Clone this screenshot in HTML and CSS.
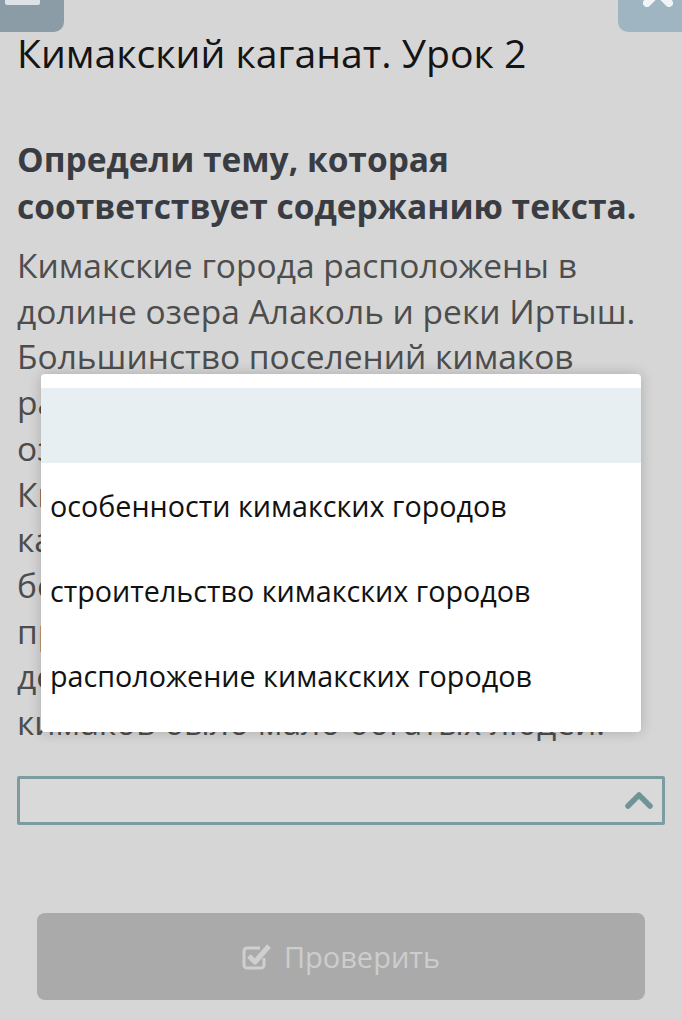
FILE: index.html
```html
<!DOCTYPE html>
<html lang="ru">
<head>
<meta charset="utf-8">
<title>Кимакский каганат. Урок 2</title>
<link rel="stylesheet" href="styles.css">
</head>
<body>
<header class="topbar">
  <div class="corner corner-left"><span class="bar"></span></div>
  <div class="corner corner-right">
    <svg class="x-icon" viewBox="0 0 30 30" width="30" height="30"><path d="M4 4 L26 26 M26 4 L4 26" stroke="#f1f4f6" stroke-width="8" stroke-linecap="round" fill="none"/></svg>
  </div>
</header>
<main class="content">
  <h1 class="title">Кимакский каганат. Урок 2</h1>
  <h2 class="question">Определи тему, которая соответствует содержанию текста.</h2>
  <p class="text">Кимакские города расположены в<br>долине озера Алаколь и реки Иртыш.<br>Большинство поселений кимаков<br>располагалось у рек и<br>озёр. Города были небольшими.<br>Кимаки строили дома из глины и<br>камня. Жилища были простыми и<br>бедными, в них не было<br>предметов роскоши. Это<br>доказывает, что среди<br>кимаков было мало богатых людей.</p>
  <div class="select">
    <svg class="chevron" viewBox="0 0 28 18" width="28" height="18"><path d="M3 15 L14 4 L25 15" stroke="#6f9497" stroke-width="5.5" fill="none" stroke-linecap="round" stroke-linejoin="round"/></svg>
  </div>
  <div class="actions">
    <button class="check" type="button">
      <svg class="check-icon" viewBox="0 0 30 28" width="30" height="28"><path d="M22 16 V23 A3 3 0 0 1 19 26 H5 A3 3 0 0 1 2 23 V9 A3 3 0 0 1 5 6 H18" stroke="#cfcfcf" stroke-width="3" fill="none"/><path d="M7 14 L13 20 L27 4" stroke="#cfcfcf" stroke-width="5" fill="none" stroke-linejoin="round"/></svg>
      <span>Проверить</span>
    </button>
  </div>
</main>
<div class="menu">
  <div class="option option-empty"></div>
  <div class="option">особенности кимакских городов</div>
  <div class="option">строительство кимакских городов</div>
  <div class="option">расположение кимакских городов</div>
</div>
</body>
</html>
```
FILE: styles.css
```css
html, body {
  margin: 0;
  padding: 0;
}
body {
  background: #d6d6d6;
  font-family: "Open Sans", "Noto Sans", sans-serif;
  width: 682px;
  height: 1020px;
  overflow: hidden;
  position: relative;
}
.topbar {
  height: 32px;
  display: flex;
  justify-content: space-between;
}
.corner {
  width: 64px;
  height: 32px;
  position: relative;
  overflow: hidden;
}
.corner-left {
  background: #8b9ca7;
  border-bottom-right-radius: 10px;
}
.corner-right {
  background: #a0b5c2;
  border-bottom-left-radius: 10px;
}
.bar {
  position: absolute;
  left: 5px;
  top: 0;
  width: 35px;
  height: 5px;
  background: #dde2e6;
  border-radius: 0 0 2px 2px;
}
.x-icon {
  position: absolute;
  left: 25px;
  top: -23px;
}
.content {
  padding: 0 17px;
}
.title {
  margin: 0;
  font-size: 39.2px;
  line-height: 42px;
  font-weight: 400;
  color: #141414;
}
.question {
  margin: 62px 0 0;
  font-size: 33.5px;
  line-height: 47px;
  font-weight: 700;
  color: #393d43;
}
.text {
  margin: 13px 0 0;
  font-size: 33.5px;
  line-height: 45.7px;
  color: #4d4d4d;
  white-space: nowrap;
}
.select {
  margin-top: 30px;
  height: 43px;
  border: 3px solid #7c9ca1;
  border-radius: 2px;
  background: #d9d9d9;
  display: flex;
  align-items: center;
  justify-content: flex-end;
  padding-right: 9px;
}
.chevron {
  display: block;
}
.actions {
  margin-top: 88px;
  padding: 0 20px;
}
.check {
  width: 100%;
  height: 87px;
  border: none;
  border-radius: 8px;
  background: #aaaaaa;
  color: #cdcdcd;
  font-family: "Open Sans", "Noto Sans", sans-serif;
  font-size: 29px;
  display: flex;
  align-items: center;
  justify-content: center;
  gap: 12px;
  padding: 0;
}
.menu {
  position: absolute;
  left: 41px;
  top: 374px;
  width: 600px;
  padding: 14px 0;
  background: #ffffff;
  border-radius: 4px;
  box-shadow: 0 0 14px rgba(0, 0, 0, 0.2);
}
.option {
  height: 85px;
  display: flex;
  align-items: center;
  padding-left: 9px;
  font-size: 28.7px;
  color: #111111;
}
.option-empty {
  height: 75px;
  background: #e8eff2;
}
```
